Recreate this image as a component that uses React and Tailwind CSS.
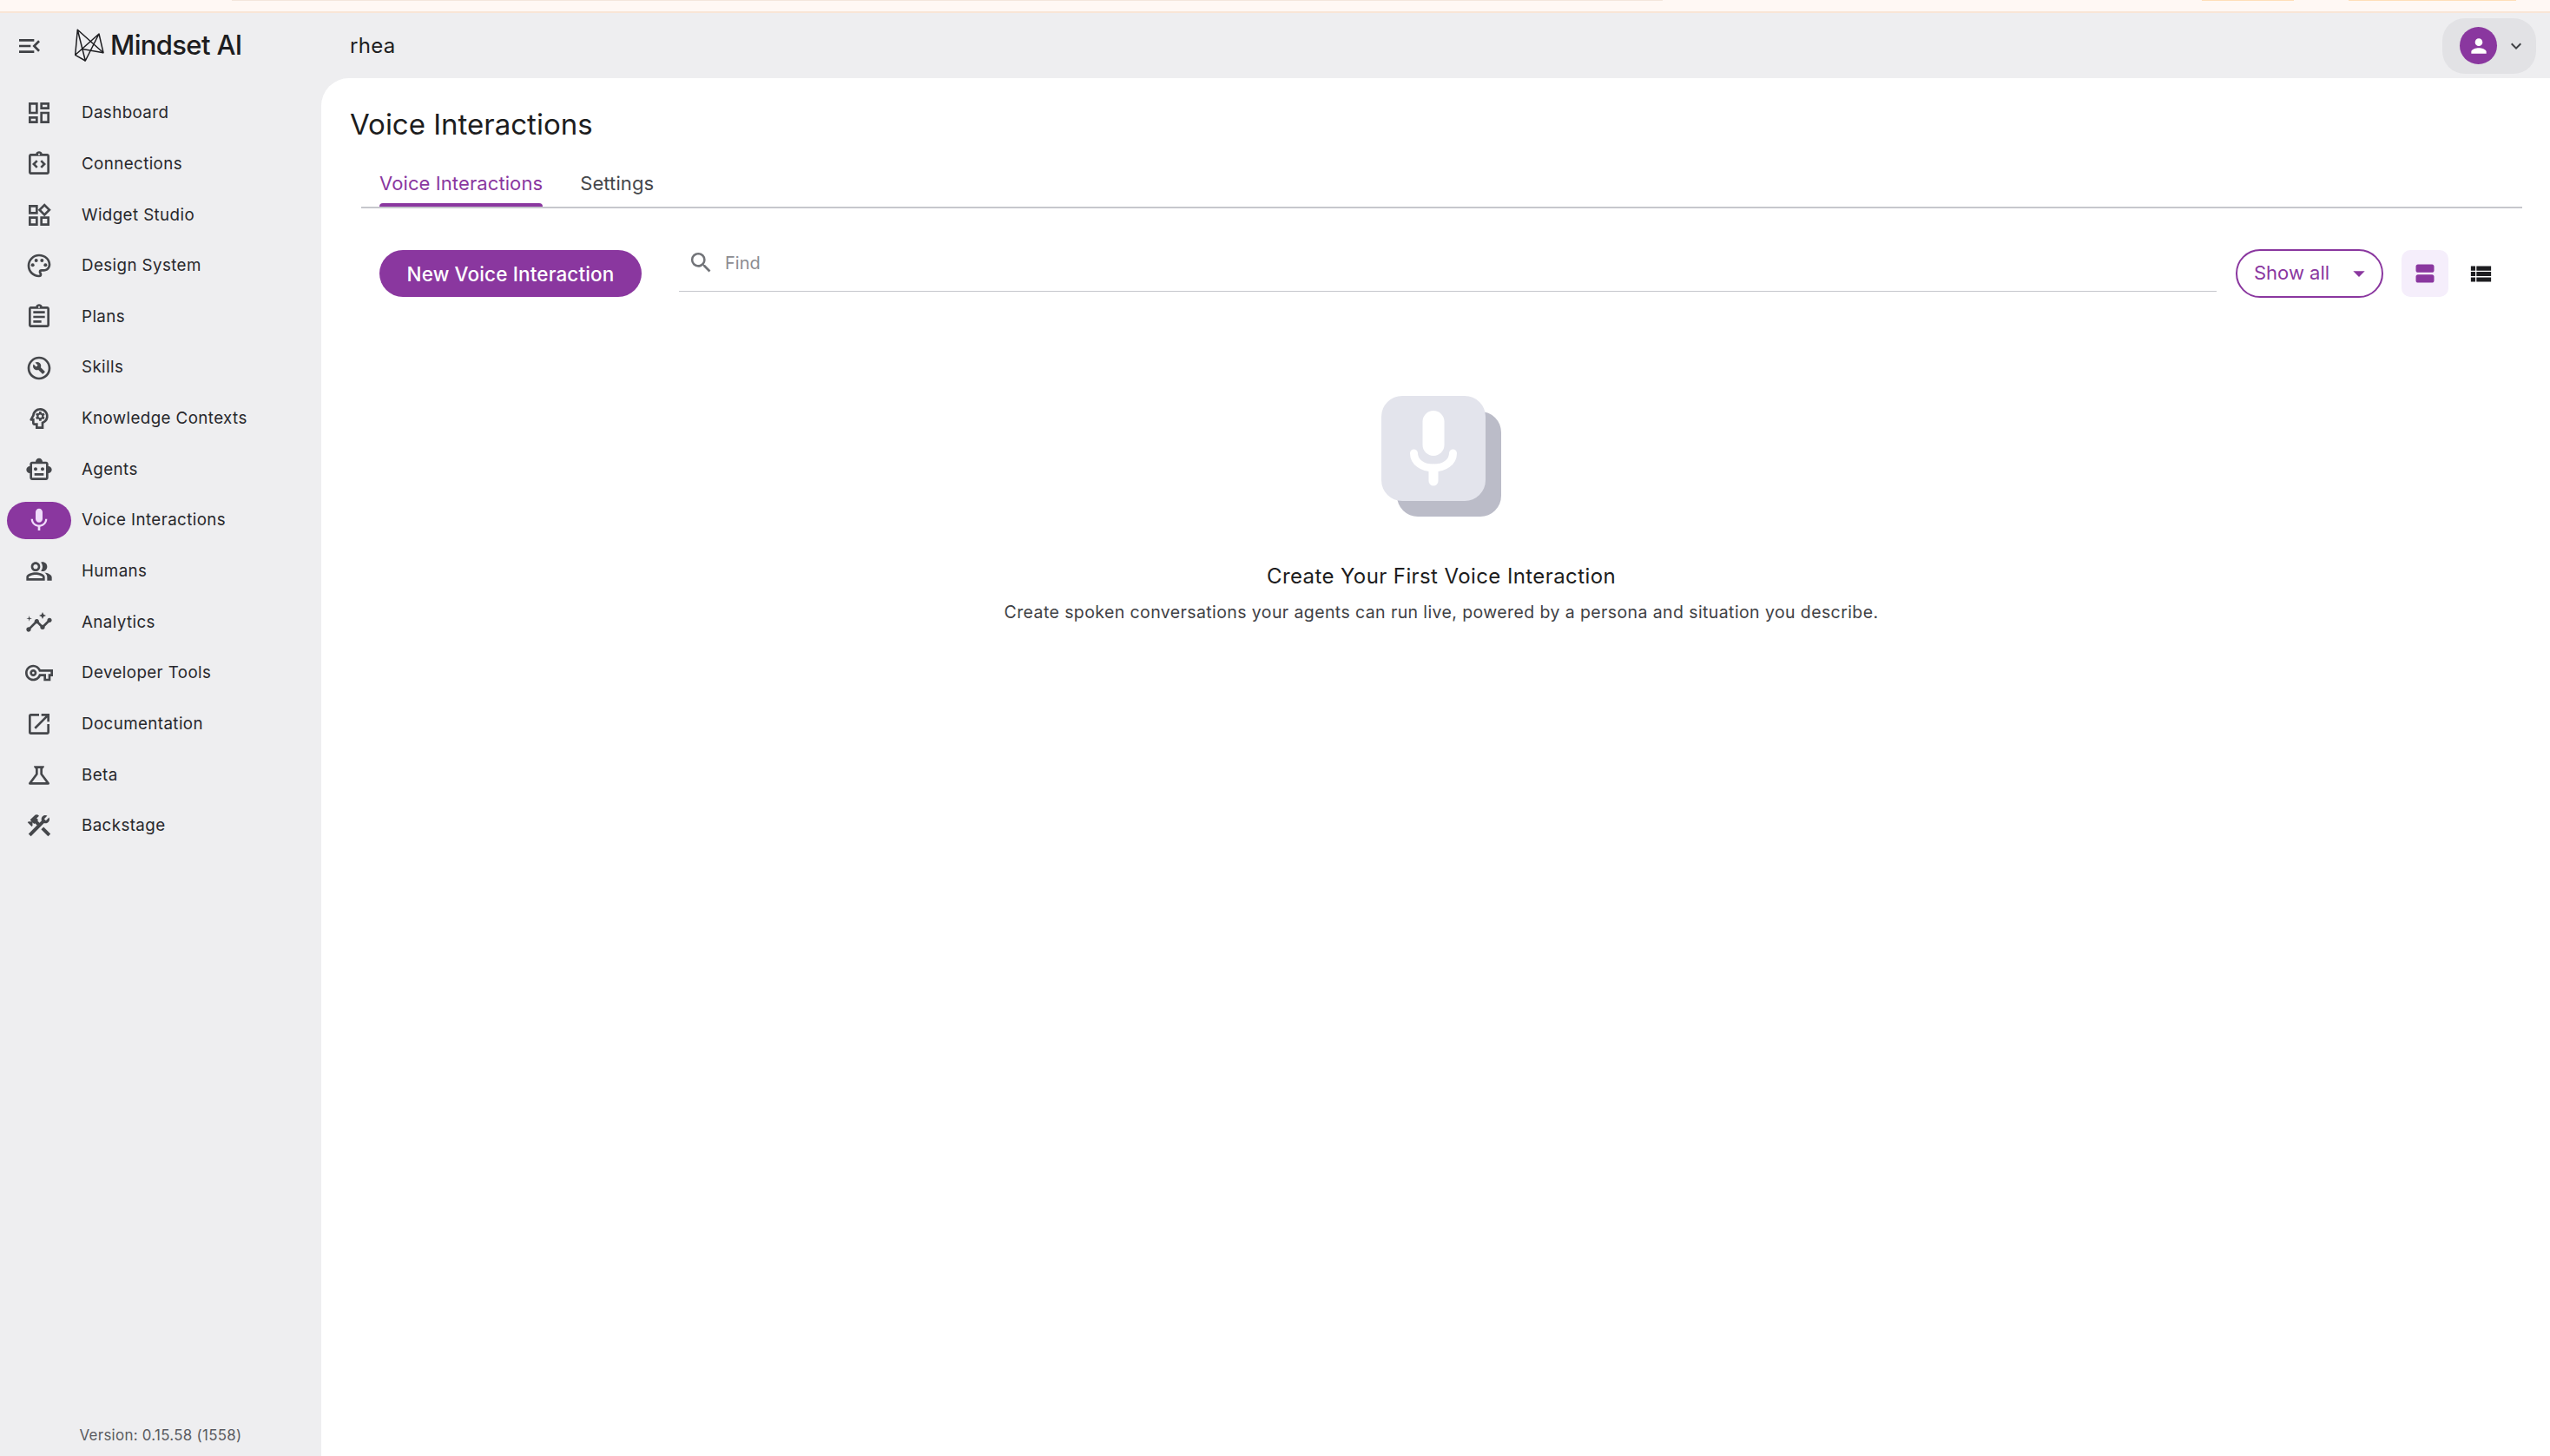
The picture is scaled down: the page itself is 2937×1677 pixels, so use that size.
import React from 'react';
import {
  MdMenuOpen, MdOutlineDashboard, MdOutlineIntegrationInstructions, MdOutlineWidgets, MdOutlinePalette,
  MdOutlineAssignment, MdOutlineBuildCircle, MdOutlinePsychology, MdOutlineSmartToy, MdMic, MdOutlinePeopleAlt,
  MdInsights, MdOutlineVpnKey, MdOutlineOpenInNew, MdOutlineScience, MdConstruction, MdSearch,
  MdArrowDropDown, MdViewAgenda, MdViewList, MdPerson, MdKeyboardArrowDown,
} from 'react-icons/md';

const navItems = [
  { label: 'Dashboard', icon: MdOutlineDashboard },
  { label: 'Connections', icon: MdOutlineIntegrationInstructions },
  { label: 'Widget Studio', icon: MdOutlineWidgets },
  { label: 'Design System', icon: MdOutlinePalette },
  { label: 'Plans', icon: MdOutlineAssignment },
  { label: 'Skills', icon: MdOutlineBuildCircle },
  { label: 'Knowledge Contexts', icon: MdOutlinePsychology },
  { label: 'Agents', icon: MdOutlineSmartToy },
  { label: 'Voice Interactions', icon: MdMic, active: true },
  { label: 'Humans', icon: MdOutlinePeopleAlt },
  { label: 'Analytics', icon: MdInsights },
  { label: 'Developer Tools', icon: MdOutlineVpnKey },
  { label: 'Documentation', icon: MdOutlineOpenInNew },
  { label: 'Beta', icon: MdOutlineScience },
  { label: 'Backstage', icon: MdConstruction },
];

function Logo() {
  return (
    <svg viewBox="10 8 36 38.5" className="h-[38.5px] w-[36px] shrink-0" fill="none" stroke="#1d1d20" strokeWidth="1.5" strokeLinejoin="round">
      <path d="M14.3 9.3 L11.7 38.3 L39 14 L44 35.7 L14.3 9.3 L23.3 45 L39 14" />
      <path d="M11.7 38.3 L23.3 45 M20 31.5 L44 35.7" />
    </svg>
  );
}

function EmptyMic() {
  return (
    <svg viewBox="0 0 138 139" className="h-[139px] w-[138px]">
      <rect x="18" y="18" width="120" height="121" rx="24" fill="#bbbcc8" />
      <rect x="0" y="0" width="120" height="121" rx="24" fill="#e3e4ec" />
      <rect x="47.5" y="17" width="25" height="52" rx="12.5" fill="white" />
      <path d="M37.5 66 C37.5 76 47 83 60 83 C73 83 82.5 76 82.5 66" fill="none" stroke="white" strokeWidth="9" strokeLinecap="round" />
      <path d="M60 84 V98" fill="none" stroke="white" strokeWidth="11" strokeLinecap="round" />
    </svg>
  );
}

export default function App() {
  return (
    <div className="flex h-screen w-screen flex-col overflow-hidden bg-[#eeeef0] font-['Inter',sans-serif] text-[#1d1d20]">
      {/* Top strip */}
      <div className="flex h-[15px] shrink-0 items-start border-b-2 border-[#f9e5d6] bg-[#fff8f4]">
        <span className="ml-[267px] h-[1px] w-[1648px] bg-[#f3e6dc]" />
        <span className="ml-[621px] h-[1px] w-[106px] bg-[#ffdfb8]" />
        <span className="ml-[63px] h-[1px] w-[193px] bg-[#ffdfb8]" />
      </div>

      {/* Header */}
      <header className="flex h-[75px] shrink-0 items-center">
        <button className="ml-[18px] flex w-[32px] justify-center text-[#3f4145]">
          <MdMenuOpen className="h-[32px] w-[32px]" />
        </button>
        <div className="ml-[35px] flex w-[318px] items-center gap-[6px]">
          <Logo />
          <span className="text-[31px] font-medium tracking-[-0.65px] text-[#1d1d20]">Mindset AI</span>
        </div>
        <span className="text-[24px] tracking-[0.3px]">rhea</span>
        <div className="ml-auto mr-[16px] flex h-[64px] w-[108px] items-center rounded-[26px] bg-[#e2e2e5] pl-[20px]">
          <div className="flex h-[43px] w-[43px] items-center justify-center rounded-full bg-[#8a379f] text-white">
            <MdPerson className="h-[26px] w-[26px]" />
          </div>
          <MdKeyboardArrowDown className="ml-[10px] h-[24px] w-[24px] text-[#3f4145]" />
        </div>
      </header>

      <div className="flex min-h-0 flex-1">
        {/* Sidebar */}
        <aside className="flex w-[370px] shrink-0 flex-col pt-[11px]">
          <nav className="flex flex-col">
            {navItems.map((item) => {
              const Icon = item.icon;
              return (
                <a key={item.label} className="flex h-[58.65px] items-center gap-[12px] pl-[8px]">
                  <span className={`flex h-[43px] w-[74px] items-center justify-center rounded-full ${item.active ? 'bg-[#8a379f] text-[#f0dcfb]' : 'text-[#45474b]'}`}>
                    <Icon className="h-[32px] w-[32px]" />
                  </span>
                  <span className="text-[18.75px] tracking-[0.4px] text-[#28282c]">{item.label}</span>
                </a>
              );
            })}
          </nav>
          <div className="mt-auto pb-[11px] text-center text-[16.875px] tracking-[0.3px] text-[#5a5b60]">
            Version: 0.15.58 (1558)
          </div>
        </aside>

        {/* Main */}
        <main className="flex min-w-0 flex-1 flex-col rounded-tl-[32px] bg-white pt-[33px]">
          <h1 className="pl-[33px] text-[33px] font-normal leading-[40px]">Voice Interactions</h1>

          <div className="ml-[46px] mr-[32px] mt-[22px] flex h-[55px] gap-[43px] border-b-2 border-[#c6c7cc] pl-[21px]">
            <div className="relative flex items-center text-[22px] tracking-[0.1px] text-[#8a379f]">
              Voice Interactions
              <span className="absolute inset-x-0 bottom-0 h-[4px] rounded-t bg-[#8a379f]" />
            </div>
            <div className="flex items-center text-[22px] tracking-[0.1px] text-[#45474b]">Settings</div>
          </div>

          <div className="ml-[67px] mr-[53px] mt-[48px] flex items-start">
            <button className="flex h-[54px] w-[302px] shrink-0 items-center justify-center rounded-full bg-[#8a379f] pt-[1px] text-[22.5px] font-medium tracking-[0.15px] text-white">
              New Voice Interaction
            </button>
            <div className="ml-[43px] flex h-[48px] flex-1 items-center gap-[12px] border-b border-[#c6c7cc] pb-[18px] pl-[10px]">
              <MdSearch className="h-[31px] w-[31px] text-[#717378]" />
              <span className="text-[20px] text-[#8b8c91]">Find</span>
            </div>
            <div className="-mt-[1px] ml-[22px] flex h-[56px] w-[170px] items-center justify-between rounded-full border-2 border-[#8a379f] pb-[1px] pl-[19px] pr-[10px] text-[22px] text-[#8a379f]">
              Show all
              <MdArrowDropDown className="h-[32px] w-[32px]" />
            </div>
            <div className="ml-[21px] flex h-[54px] w-[54px] items-center justify-center rounded-[10px] bg-[#f5eefb] text-[#8a379f]">
              <MdViewAgenda className="h-[28px] w-[28px]" />
            </div>
            <div className="ml-[10px] flex h-[54px] w-[54px] items-center justify-center text-[#1d1d20]">
              <MdViewList className="h-[31px] w-[31px]" />
            </div>
          </div>

          {/* Empty state */}
          <div className="ml-[45px] mr-[32px] mt-[113px] flex flex-col items-center">
            <EmptyMic />
            <h2 className="mt-[54px] text-[24px] font-normal leading-[30px] tracking-[0.4px]">Create Your First Voice Interaction</h2>
            <p className="mt-[12px] text-[19.5px] tracking-[0.4px] text-[#3f4145]">
              Create spoken conversations your agents can run live, powered by a persona and situation you describe.
            </p>
          </div>
        </main>
      </div>
    </div>
  );
}
